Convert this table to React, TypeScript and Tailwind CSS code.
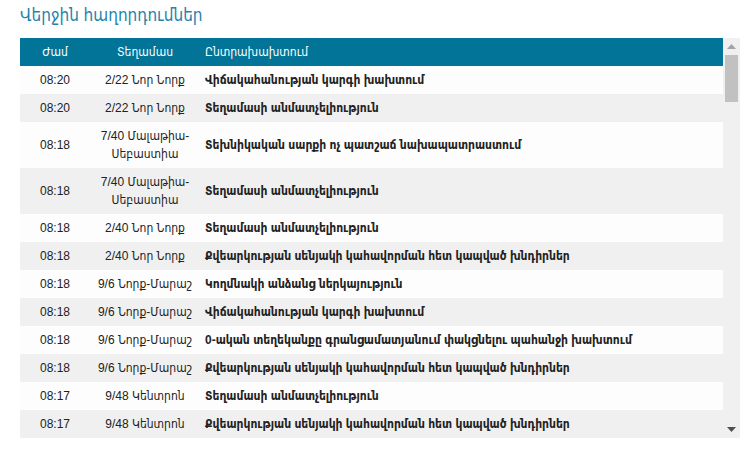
import React from "react";

type Row = { time: string; place: string[]; text: string };

const rows: Row[] = [
  { time: "08:20", place: ["2/22 Նոր Նորք"], text: "Վիճակահանության կարգի խախտում" },
  { time: "08:20", place: ["2/22 Նոր Նորք"], text: "Տեղամասի անմատչելիություն" },
  { time: "08:18", place: ["7/40 Մալաթիա-", "Սեբաստիա"], text: "Տեխնիկական սարքի ոչ պատշաճ նախապատրաստում" },
  { time: "08:18", place: ["7/40 Մալաթիա-", "Սեբաստիա"], text: "Տեղամասի անմատչելիություն" },
  { time: "08:18", place: ["2/40 Նոր Նորք"], text: "Տեղամասի անմատչելիություն" },
  { time: "08:18", place: ["2/40 Նոր Նորք"], text: "Քվեարկության սենյակի կահավորման հետ կապված խնդիրներ" },
  { time: "08:18", place: ["9/6 Նորք-Մարաշ"], text: "Կողմնակի անձանց ներկայություն" },
  { time: "08:18", place: ["9/6 Նորք-Մարաշ"], text: "Վիճակահանության կարգի խախտում" },
  { time: "08:18", place: ["9/6 Նորք-Մարաշ"], text: "0-ական տեղեկանքը գրանցամատյանում փակցնելու պահանջի խախտում" },
  { time: "08:18", place: ["9/6 Նորք-Մարաշ"], text: "Քվեարկության սենյակի կահավորման հետ կապված խնդիրներ" },
  { time: "08:17", place: ["9/48 Կենտրոն"], text: "Տեղամասի անմատչելիություն" },
  { time: "08:17", place: ["9/48 Կենտրոն"], text: "Քվեարկության սենյակի կահավորման հետ կապված խնդիրներ" },
];

export default function App() {
  return (
    <div
      className="w-[747px] h-[458px] bg-white pl-5 pt-[4px] overflow-hidden"
      style={{ fontFamily: '"Liberation Sans", "DejaVu Sans Condensed", "DejaVu Sans", sans-serif' }}
    >
      <h1 className="text-[17px] leading-[24px] h-[34px] text-[#2683ad] font-normal">
        Վերջին հաղորդումներ
      </h1>
      <div className="flex w-[720px] h-[400px]">
        <div className="w-[703px] h-[400px] overflow-hidden">
          <table className="w-full border-collapse text-[12px] text-[#222] table-fixed">
            <thead>
              <tr className="bg-[#027497] text-white h-[28px]">
                <th className="w-[70px] font-normal text-center">Ժամ</th>
                <th className="w-[110px] font-normal text-center">Տեղամաս</th>
                <th className="font-normal text-left pl-[5px]">Ընտրախախտում</th>
              </tr>
            </thead>
            <tbody>
              {rows.map((r, i) => (
                <tr
                  key={i}
                  className={
                    r.place.length > 1
                      ? i % 2 === 0 ? "bg-[#fdfdfd] h-[46px]" : "bg-[#f0f0f0] h-[46px]"
                      : i % 2 === 0 ? "bg-[#fdfdfd] h-[28px]" : "bg-[#f0f0f0] h-[28px]"
                  }
                >
                  <td className="text-center">{r.time}</td>
                  <td className="text-center leading-[18px] whitespace-nowrap">
                    {r.place.map((p, j) => (
                      <div key={j}>{p}</div>
                    ))}
                  </td>
                  <td className="pl-[5px] font-bold whitespace-nowrap">{r.text}</td>
                </tr>
              ))}
            </tbody>
          </table>
        </div>
        <ScrollBar />
      </div>
    </div>
  );
}

function ScrollBar() {
  return (
    <div className="w-[17px] h-[400px] bg-[#f0f0f0] flex flex-col items-center">
      <div className="h-[17px] flex items-center justify-center">
        <svg width="9" height="5" viewBox="0 0 9 5">
          <path d="M4.5 0 L9 5 L0 5 Z" fill="#a3a3a3" />
        </svg>
      </div>
      <div className="w-[13px] h-[47px] bg-[#c1c1c1]" />
      <div className="flex-1" />
      <div className="h-[17px] flex items-center justify-center">
        <svg width="9" height="5" viewBox="0 0 9 5">
          <path d="M0 0 L9 0 L4.5 5 Z" fill="#505050" />
        </svg>
      </div>
    </div>
  );
}
